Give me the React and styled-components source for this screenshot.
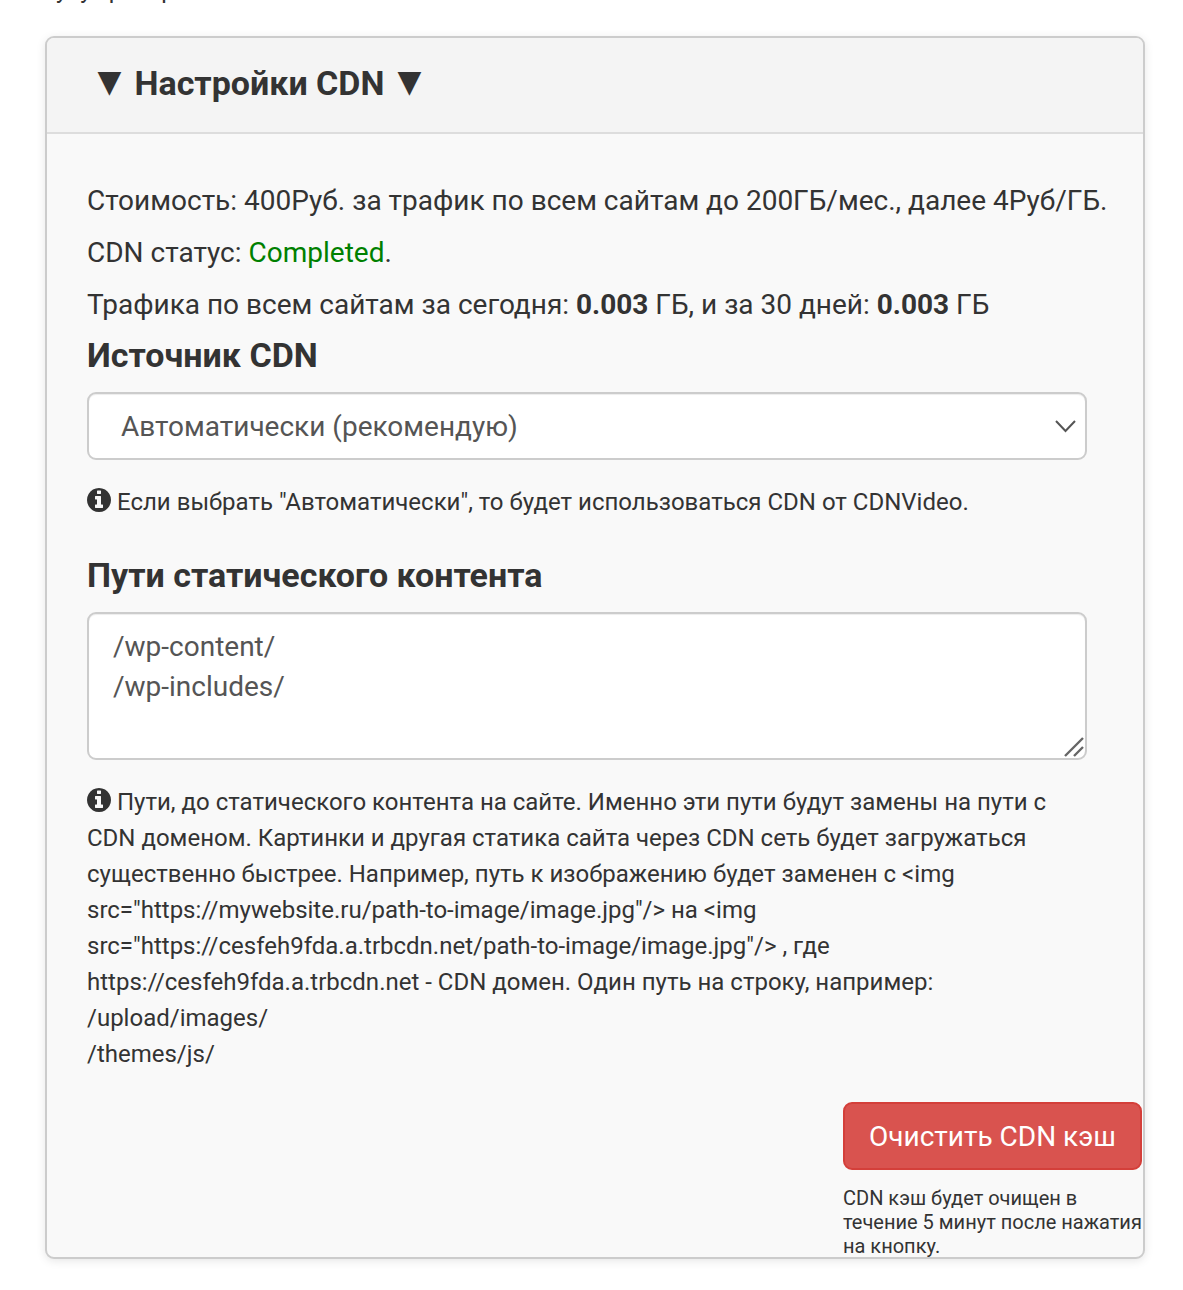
import React from 'react'
import styled, { createGlobalStyle } from 'styled-components'

const Global = createGlobalStyle`
    html, body {
        margin: 0;
        padding: 0;
        background: #fff;
    }
    body {
        font-family: Roboto, "Liberation Sans", sans-serif;
        color: #333;
        overflow: hidden;
    }
    * {
        box-sizing: border-box;
    }
`
const Page = styled.div`
    width: 1183px;
    height: 1290px;
    padding: 0 39px 0 45px;
    overflow: hidden;
`
const ClippedRow = styled.div`
    height: 36px;
    overflow: hidden;
`
const ClippedLetters = styled.div`
    display: flex;
    margin-top: -24px;
    font-size: 24px;
    line-height: 28px;
    color: #333;
`
const ClippedLetter = styled.span`
    margin-left: ${({ $left }) => $left}px;
`
const Panel = styled.section`
    width: 1100px;
    height: 1223px;
    background: #f9f9f9;
    border: 2px solid #ccc;
    border-radius: 9px;
    box-shadow: 0 2px 10px rgba(0, 0, 0, 0.1);
    overflow: hidden;
`
const PanelHeader = styled.header`
    height: 96px;
    padding: 0 46px 4px;
    background: #f4f4f4;
    border-bottom: 2px solid #ddd;
    display: flex;
    align-items: center;
    font-size: 34px;
    font-weight: 700;
    color: #333;
    white-space: pre;
`
const Arrow = styled.span`
    display: inline-block;
    width: 33px;
    margin-top: -4px;
    font-family: "DejaVu Sans", sans-serif;
    font-size: 31px;
    text-align: center;
`
const PanelBody = styled.div`
    padding: 47px 0 0 40px;
`
const Line = styled.p`
    margin: 0 0 13px;
    font-size: 28px;
    line-height: 39px;
    white-space: nowrap;
`
const Status = styled.span`
    color: green;
`
const Heading = styled.h3`
    margin: ${({ $top }) => $top || 0}px 0 19px;
    font-size: 34px;
    line-height: 36px;
    font-weight: 700;
    color: #333;
`
const SelectWrap = styled.div`
    position: relative;
    width: 1000px;
`
const Select = styled.select`
    display: block;
    width: 100%;
    height: 68px;
    padding: 0 32px;
    appearance: none;
    background: #fff;
    border: 2px solid #ccc;
    border-radius: 9px;
    box-shadow: inset 0 1px 1px rgba(0, 0, 0, 0.075);
    font: 400 28px Roboto, sans-serif;
    color: #555;
`
const Chevron = styled.svg`
    position: absolute;
    top: 28px;
    right: 11px;
    width: 21px;
    height: 14px;
    pointer-events: none;
`
const Help = styled.div`
    width: 1000px;
    margin-top: ${({ $top }) => $top}px;
    font-size: 24px;
    line-height: 36px;
`
const InfoSvg = styled.svg`
    width: 24px;
    height: 24px;
    margin-right: 6px;
    vertical-align: -2px;
`
const AreaWrap = styled.div`
    position: relative;
    width: 1000px;
`
const PathsArea = styled.textarea`
    display: block;
    width: 100%;
    height: 148px;
    padding: 13px 24px;
    background: #fff;
    border: 2px solid #ccc;
    border-radius: 9px;
    box-shadow: inset 0 1px 1px rgba(0, 0, 0, 0.075);
    font: 400 28px/40px Roboto, sans-serif;
    color: #555;
    outline: none;
    resize: none;
`
const Grip = styled.svg`
    position: absolute;
    right: 2px;
    bottom: 2px;
    width: 22px;
    height: 22px;
    pointer-events: none;
`
const ClearColumn = styled.div`
    width: 299px;
    margin: 30px 0 0 756px;
`
const ClearButton = styled.button`
    display: block;
    width: 100%;
    height: 68px;
    background: #d9534f;
    border: 2px solid #d43f3a;
    border-radius: 9px;
    color: #fff;
    font: 400 28px Roboto, sans-serif;
    padding: 0;
`
const ClearNote = styled.div`
    margin-top: 16px;
    font-size: 20px;
    line-height: 24px;
`

const clippedLetters = [
    { letter: 'у', left: 11 },
    { letter: 'у', left: 13 },
    { letter: 'р', left: 17 },
    { letter: 'р', left: 39 },
]

const InfoIcon = () => (
    <InfoSvg viewBox="128 128 1536 1536" fill="#333">
        <path
            fillRule="evenodd"
            d="M1152 1376v-160q0-14-9-23t-23-9h-96v-512q0-14-9-23t-23-9h-320q-14 0-23 9t-9 23v160q0 14 9 23t23 9h96v320h-96q-14 0-23 9t-9 23v160q0 14 9 23t23 9h448q14 0 23-9t9-23zm-128-896v-160q0-14-9-23t-23-9h-192q-14 0-23 9t-9 23v160q0 14 9 23t23 9h192q14 0 23-9t9-23zm640 416q0 209-103 385.5t-279.5 279.5-385.5 103-385.5-103-279.5-279.5-103-385.5 103-385.5 279.5-279.5 385.5-103 385.5 103 279.5 279.5 103 385.5z"
        />
    </InfoSvg>
)

const App = () => {
    return (
        <Page>
            <Global />
            <ClippedRow>
                <ClippedLetters>
                    {clippedLetters.map((item, i) => (
                        <ClippedLetter key={i} $left={item.left}>{item.letter}</ClippedLetter>
                    ))}
                </ClippedLetters>
            </ClippedRow>
            <Panel>
                <PanelHeader><Arrow>▼</Arrow> Настройки CDN <Arrow>▼</Arrow></PanelHeader>
                <PanelBody>
                    <Line>Стоимость: 400Руб. за трафик по всем сайтам до 200ГБ/мес., далее 4Руб/ГБ.</Line>
                    <Line>CDN статус: <Status>Completed</Status>.</Line>
                    <Line>Трафика по всем сайтам за сегодня: <b>0.003</b> ГБ, и за 30 дней: <b>0.003</b> ГБ</Line>
                    <Heading>Источник CDN</Heading>
                    <SelectWrap>
                        <Select defaultValue="auto">
                            <option value="auto">Автоматически (рекомендую)</option>
                        </Select>
                        <Chevron viewBox="0 0 21 14" fill="none" stroke="#555" strokeWidth="2">
                            <path d="M1 1 L10.5 11 L20 1" />
                        </Chevron>
                    </SelectWrap>
                    <Help $top={24}>
                        <InfoIcon />
                        Если выбрать "Автоматически", то будет использоваться CDN от CDNVideo.
                    </Help>
                    <Heading $top={37}>Пути статического контента</Heading>
                    <AreaWrap>
                        <PathsArea defaultValue={'/wp-content/\n/wp-includes/'} />
                        <Grip viewBox="0 0 22 22" fill="none" stroke="#666" strokeWidth="2.4">
                            <path d="M2 20 L20 2 M11 20 L20 11" />
                        </Grip>
                    </AreaWrap>
                    <Help $top={24}>
                        <InfoIcon />
                        Пути, до статического контента на сайте. Именно эти пути будут замены на пути с CDN доменом. Картинки и другая статика сайта через CDN сеть будет загружаться существенно быстрее. Например, путь к изображению будет заменен с &lt;img src="https://mywebsite.ru/path-to-image/image.jpg"/&gt; на &lt;img src="https://cesfeh9fda.a.trbcdn.net/path-to-image/image.jpg"/&gt; , где https://cesfeh9fda.a.trbcdn.net - CDN домен. Один путь на строку, например:
                        <br />/upload/images/
                        <br />/themes/js/
                    </Help>
                    <ClearColumn>
                        <ClearButton>Очистить CDN кэш</ClearButton>
                        <ClearNote>CDN кэш будет очищен в течение 5 минут после нажатия на кнопку.</ClearNote>
                    </ClearColumn>
                </PanelBody>
            </Panel>
        </Page>
    )
}

export default App
